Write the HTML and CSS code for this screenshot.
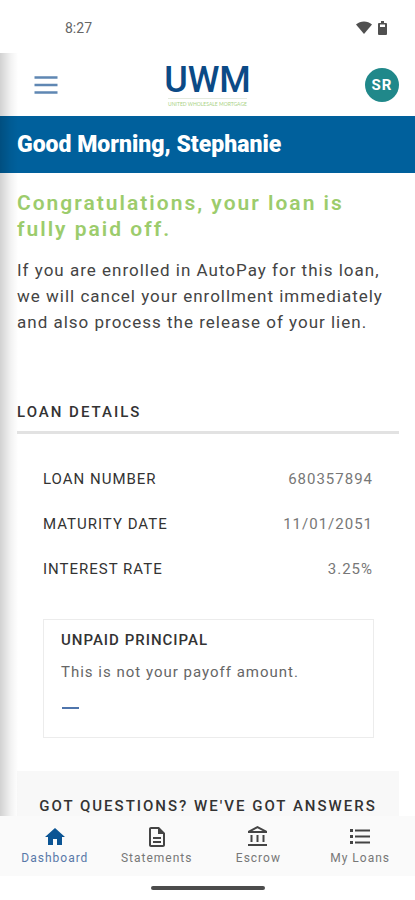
FILE: index.html
```html
<!DOCTYPE html>
<html lang="en">
<head>
    <meta charset="UTF-8">
    <meta name="viewport" content="width=device-width, initial-scale=1.0">
    <title>UWM - Dashboard</title>
    <link rel="stylesheet" href="styles.css">
</head>
<body>
    <div class="status-bar">
        <span class="clock">8:27</span>
        <div class="status-icons">
            <svg width="16" height="13" viewBox="0 0 16 13"><path d="M0 3.500C4.500-.6 11.500-.6 16 3.500L8 13z" fill="#505050"/></svg>
            <svg width="9" height="14" viewBox="0 0 9 14"><path d="M3 0h3v2h2q1 0 1 1v10q0 1-1 1H1q-1 0-1-1V3q0-1 1-1h2z" fill="#505050"/><path d="M2 3.500h5V6H2z" fill="#fff"/></svg>
        </div>
    </div>

    <div class="app">
        <header class="header">
            <button class="menu-btn" aria-label="Menu">
                <svg width="24" height="20" viewBox="0 0 24 20"><path d="M.5 2.500h23M.5 10h23M.5 17.500h23" stroke="#5f87b3" stroke-width="2.400"/></svg>
            </button>
            <a class="logo" href="#">
                <span class="logo-name">UWM</span>
                <span class="logo-tagline">UNITED WHOLESALE MORTGAGE</span>
            </a>
            <button class="avatar" aria-label="Account">SR</button>
        </header>

        <h1 class="greeting">Good Morning, Stephanie</h1>

        <main class="content">
            <h2 class="congrats">Congratulations, your loan is fully paid off.</h2>
            <p class="message">If you are enrolled in AutoPay for this loan, we will cancel your enrollment immediately and also process the release of your lien.</p>

            <h3 class="section-title">LOAN DETAILS</h3>
            <dl class="details">
                <div class="detail-row">
                    <dt>LOAN NUMBER</dt>
                    <dd>680357894</dd>
                </div>
                <div class="detail-row">
                    <dt>MATURITY DATE</dt>
                    <dd>11/01/2051</dd>
                </div>
                <div class="detail-row">
                    <dt>INTEREST RATE</dt>
                    <dd>3.25%</dd>
                </div>
            </dl>

            <section class="principal">
                <h4>UNPAID PRINCIPAL</h4>
                <p>This is not your payoff amount.</p>
                <div class="empty-amount"></div>
            </section>

            <section class="questions">
                <h3>GOT QUESTIONS? WE'VE GOT ANSWERS</h3>
            </section>
        </main>
    </div>

    <nav class="bottom-nav">
        <a class="nav-item active" href="#">
            <svg width="24" height="24" viewBox="0 0 24 24"><path d="M10 20v-6h4v6h5v-8h3L12 3 2 12h3v8z" fill="currentColor"/></svg>
            <span>Dashboard</span>
        </a>
        <a class="nav-item" href="#">
            <svg width="24" height="24" viewBox="0 0 24 24"><path d="M8 16h8v2H8zm0-4h8v2H8zm6-10H6c-1.100 0-2 .9-2 2v16c0 1.100.89 2 1.990 2H18c1.100 0 2-.9 2-2V8l-6-6zm4 18H6V4h7v5h5v11z" fill="#444"/></svg>
            <span>Statements</span>
        </a>
        <a class="nav-item" href="#">
            <svg width="24" height="24" viewBox="0 0 24 24"><path d="M6.500 10h-2v7h2zm6 0h-2v7h2zm8.500 9H2v2h19zm-2.500-9h-2v7h2zm-7-6.740L16.710 6H6.290l5.210-2.740m0-2.260L2 6v2h19V6z" fill="#444"/></svg>
            <span>Escrow</span>
        </a>
        <a class="nav-item" href="#">
            <svg width="24" height="24" viewBox="0 0 24 24"><path d="M2 4h3v3H2zm0 6h3v3H2zm0 6h3v3H2zM7 4.500h15v2H7zm0 6h15v2H7zm0 6h15v2H7z" fill="#444"/></svg>
            <span>My Loans</span>
        </a>
    </nav>

    <div class="gesture-bar"><div class="gesture-handle"></div></div>
</body>
</html>
```
FILE: styles.css
```css
* {
    box-sizing: border-box;
    margin: 0;
    padding: 0;
}

body {
    display: flex;
    flex-direction: column;
    height: 100vh;
    font-family: Roboto, "Liberation Sans", sans-serif;
    letter-spacing: 1px;
    color: #444;
    background: #fff;
}

button {
    border: none;
    background: none;
    font-family: inherit;
    cursor: pointer;
}

a {
    text-decoration: none;
}

svg {
    display: block;
}

.status-bar {
    display: flex;
    flex-shrink: 0;
    justify-content: space-between;
    align-items: center;
    height: 53px;
    padding: 2px 28px 0 65px;
}

.clock {
    font-size: 14px;
    letter-spacing: 0;
    color: #666;
}

.status-icons {
    display: flex;
    align-items: center;
    gap: 6px;
}

.app {
    position: relative;
    flex: 1;
    min-height: 0;
    overflow: hidden;
}

/* shadow of the closed side drawer */
.app::before {
    content: "";
    position: absolute;
    top: 0;
    bottom: 0;
    left: 0;
    width: 18px;
    background: linear-gradient(to right, rgba(0,0,0,0.18), rgba(0,0,0,0.05) 60%, rgba(0,0,0,0));
}

.header {
    display: grid;
    grid-template-columns: 1fr auto 1fr;
    align-items: center;
    height: 63px;
    padding: 0 16px;
}

.menu-btn {
    justify-self: start;
    padding-left: 18px;
}

.logo {
    display: flex;
    flex-direction: column;
    align-items: center;
}

.logo-name {
    font-size: 36px;
    font-weight: 500;
    line-height: 36px;
    letter-spacing: 0;
    color: #0b4a86;
}

.logo-tagline {
    padding-top: 2px;
    border-top: 1px solid #e4eadf;
    font-family: Lato, sans-serif;
    font-size: 5px;
    line-height: 7px;
    letter-spacing: 0;
    color: #a9d284;
}

.avatar {
    justify-self: end;
    width: 34px;
    height: 34px;
    border-radius: 50%;
    font-size: 15px;
    font-weight: 700;
    letter-spacing: 1px;
    color: #fff;
    background-color: #20888a;
}

.greeting {
    padding: 14px 17px;
    font-size: 23px;
    font-weight: 900;
    line-height: 29px;
    letter-spacing: 0;
    color: #fff;
    background-color: #00609c;
}

.content {
    padding: 17px 16px 0 17px;
}

.congrats {
    font-size: 21px;
    font-weight: 600;
    line-height: 26px;
    letter-spacing: 2px;
    color: #9ccc6c;
}

.message {
    margin-top: 15px;
    font-size: 17px;
    line-height: 26px;
}

.section-title {
    margin-top: 67px;
    padding-bottom: 9px;
    border-bottom: 3px solid #e2e2e2;
    font-size: 15px;
    font-weight: 500;
    line-height: 20px;
    letter-spacing: 2px;
    color: #333;
}

.details {
    display: flex;
    flex-direction: column;
    gap: 25px;
    padding: 35px 26px 0;
    font-size: 15px;
    line-height: 20px;
}

.detail-row {
    display: flex;
    justify-content: space-between;
}

.detail-row dt {
    color: #333;
}

.detail-row dd {
    color: #777;
}

.principal {
    margin: 40px 25px 0 26px;
    padding: 10px 17px 28px;
    border: 1px solid #ececec;
    font-size: 15px;
    line-height: 20px;
}

.principal h4 {
    font-weight: 500;
    color: #333;
}

.principal p {
    margin-top: 12px;
    color: #666;
}

.empty-amount {
    width: 17px;
    height: 2px;
    margin: 25px 0 0 1px;
    background-color: #4f75ac;
}

.questions {
    display: flex;
    justify-content: center;
    margin-top: 33px;
    padding: 25px 0;
    background-color: #f8f8f8;
}

.questions h3 {
    font-size: 15px;
    font-weight: 500;
    line-height: 20px;
    letter-spacing: 2px;
    white-space: nowrap;
    color: #333;
}

.bottom-nav {
    display: flex;
    flex-shrink: 0;
    justify-content: space-between;
    height: 60px;
    padding: 9px 4px 0;
    background-color: #fafafa;
}

.nav-item {
    display: flex;
    flex: 1;
    flex-direction: column;
    align-items: center;
    gap: 1px;
    font-size: 12px;
    line-height: 16px;
    color: #777;
}

.nav-item.active {
    color: #5878a8;
}

.nav-item.active svg {
    color: #0b5494;
}

.gesture-bar {
    display: flex;
    flex-shrink: 0;
    justify-content: center;
    align-items: center;
    height: 24px;
}

.gesture-handle {
    width: 114px;
    height: 4px;
    border-radius: 2px;
    background-color: #4c4c4c;
}
```
